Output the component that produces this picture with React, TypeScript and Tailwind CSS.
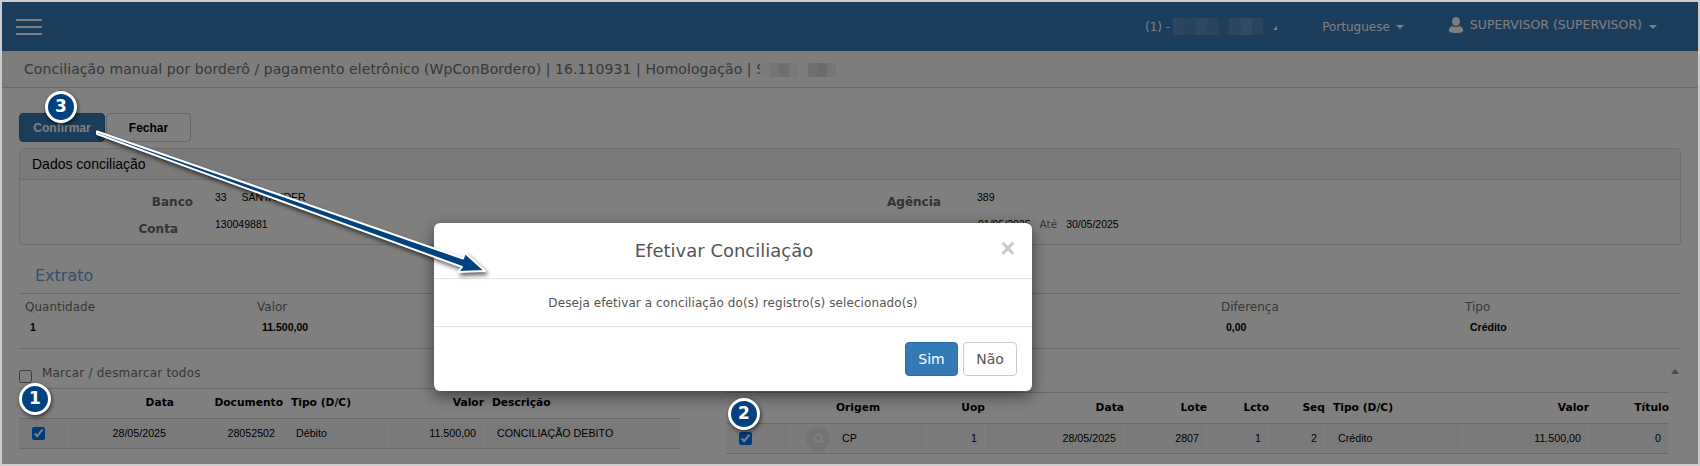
import { Search } from 'lucide-react'

type Col = { w: number; head?: string; cell?: string; align?: 'l' | 'r'; headPad?: number }

const leftCols: Col[] = [
  { w: 49 },
  { w: 106, head: 'Data', cell: '28/05/2025', align: 'r' },
  { w: 109, head: 'Documento', cell: '28052502', align: 'r' },
  { w: 105, head: 'Tipo (D/C)', cell: 'Débito', align: 'l', headPad: 8 },
  { w: 96, head: 'Valor', cell: '11.500,00', align: 'r' },
  { w: 197, head: 'Descrição', cell: 'CONCILIAÇÃO DEBITO', align: 'l', headPad: 8 },
]

const rightCols: Col[] = [
  { w: 65 },
  { w: 38 },
  { w: 98, head: 'Origem', cell: 'CP', align: 'l', headPad: 7 },
  { w: 58, head: 'Uop', cell: '1', align: 'r' },
  { w: 139, head: 'Data', cell: '28/05/2025', align: 'r' },
  { w: 83, head: 'Lote', cell: '2807', align: 'r' },
  { w: 62, head: 'Lcto', cell: '1', align: 'r' },
  { w: 56, head: 'Seq', cell: '2', align: 'r' },
  { w: 138, head: 'Tipo (D/C)', cell: 'Crédito', align: 'l', headPad: 8 },
  { w: 126, head: 'Valor', cell: '11.500,00', align: 'r' },
  { w: 80, head: 'Título', cell: '0', align: 'r' },
]

// these sit under the dark overlay, so the colours are twice as bright as they look
const navBlur = ['#5a8cba', '#4f86b6', '#5e90bc', '#5488b8', '#437cb0', '#5a8cba', '#6496c0', '#5488b8']
const titleBlur = ['#f4f4f4', '#e8e8e8', '#dcdcdc', '#f0f0f0', '#fafafa', '#e0e0e0', '#d8d8d8', '#ececec']

function Caret() {
  return <span className="inline-block border-x-[4px] border-t-[4px] border-x-transparent border-t-white" />
}

function Badge({ n, className }: { n: number; className: string }) {
  return (
    <div
      className={`absolute z-30 flex h-[32px] w-[32px] items-center justify-center rounded-full border-[3px] border-white bg-[#00427f] font-['DejaVu_Sans',sans-serif] text-[17px] font-bold text-white shadow-[1px_2px_4px_rgba(0,0,0,0.6)] ${className}`}
    >
      {n}
    </div>
  )
}

function Blur({ colors, className }: { colors: string[]; className: string }) {
  return (
    <div className={`relative flex ${className}`}>
      {colors.map((c, i) => (
        <span key={i} className="h-full flex-1" style={{ backgroundColor: c }} />
      ))}
    </div>
  )
}

function DataTable({ cols, icon }: { cols: Col[]; icon?: boolean }) {
  return (
    <div className="font-['Liberation_Sans',sans-serif] text-black">
      <div
        className={`flex items-center border-y border-[#d4d4d4] font-['DejaVu_Sans',sans-serif] text-[10.7px] leading-none font-bold ${icon ? 'h-[32px]' : 'h-[31px]'}`}
      >
        {cols.map((c, i) => (
          <div
            key={i}
            style={{ width: c.w, paddingLeft: c.headPad }}
            className={c.align === 'r' ? 'text-right' : ''}
          >
            {c.head}
          </div>
        ))}
      </div>
      <div className="flex h-[30px] items-center border-b border-[#d4d4d4] bg-[#f5f5f5] text-[10.7px]">
        {cols.map((c, i) => (
          <div
            key={i}
            style={{ width: c.w }}
            className={`flex h-full items-center border-r border-white ${c.align === 'r' ? 'justify-end pr-[7px]' : 'pl-[13px]'}`}
          >
            {i === 0 && <input type="checkbox" defaultChecked className="m-0 h-[13px] w-[13px]" />}
            {i === 1 && icon && (
              <span className="ml-[2px] flex h-[24px] w-[24px] shrink-0 items-center justify-center rounded-full bg-[#e6e6e6]">
                <Search size={11} strokeWidth={3.5} className="text-white" />
              </span>
            )}
            {c.cell}
          </div>
        ))}
      </div>
    </div>
  )
}

export default function App() {
  return (
    <div className="relative h-[466px] w-[1700px] overflow-hidden bg-[#cccccc] p-[2px]">
      <div className="relative h-full w-full overflow-hidden bg-white font-['DejaVu_Sans',sans-serif] text-[#707070]">
        <nav className="flex h-[49px] items-center bg-[#337ab7] text-[12px] text-white">
          <div className="ml-[14px] flex w-[26px] flex-col gap-[5px]">
            <span className="h-[2px] bg-white" />
            <span className="h-[2px] bg-white" />
            <span className="h-[2px] bg-white" />
          </div>
          <span className="ml-[1103px]">(1) -</span>
          <Blur colors={navBlur} className="ml-[3px] h-[17px] w-[90px]" />
          <span className="mt-[3px] ml-[10px] inline-block border-b-[4px] border-l-[4px] border-b-white border-l-transparent" />
          <span className="ml-[45px]">Portuguese</span>
          <span className="ml-[6px] flex"><Caret /></span>
          <svg viewBox="0 0 14 16" className="mb-[4px] ml-[45px] h-[16px] w-[14px] fill-white">
            <ellipse cx="7" cy="4.5" rx="4" ry="4.5" />
            <path d="M0 12.5C0 10.5 2 9.5 4 9.3c1 1 5 1 6 0 2 .2 4 1.2 4 3.2V14c0 1-1.5 2-7 2s-7-1-7-2z" />
          </svg>
          <span className="mb-[2px] ml-[7px] text-[12.5px]">SUPERVISOR (SUPERVISOR)</span>
          <span className="ml-[7px] flex"><Caret /></span>
        </nav>

        <div className="flex h-[37px] items-center border-b border-[#d4d4d4] bg-[#fafafa] pl-[22px] text-[14px] tracking-[0.08px]">
          Conciliação manual por borderô / pagamento eletrônico (WpConBordero) | 16.110931 | Homologação | S
          <Blur colors={titleBlur} className="mt-[1px] -ml-[5px] h-[14px] w-[76px]" />
        </div>

        <main className="px-[17px]">
          <div className="mt-[25px] flex font-['Liberation_Sans',sans-serif] text-[12px] font-bold">
            <button className="h-[29px] w-[86px] rounded-[4px] border border-[#2e6da4] bg-[#337ab7] text-white">
              Confirmar
            </button>
            <button className="ml-px h-[29px] w-[85px] rounded-[4px] border border-[#ccc] bg-white text-black">
              Fechar
            </button>
          </div>

          <section className="mt-[6px] h-[97px] rounded-[4px] border border-[#ddd]">
            <div className="flex h-[31px] items-center border-b border-[#ddd] bg-[#f5f5f5] pl-[12px] font-['Liberation_Sans',sans-serif] text-[14px] text-black">
              Dados conciliação
            </div>
            <div className="relative text-[12px] text-[#666]">
              <div className="flex pt-[10px]">
                <div className="w-[173px] pt-[3px] text-right font-bold">Banco</div>
                <div className="ml-[22px] w-[672px] font-['Liberation_Sans',sans-serif] text-[10.5px] text-black">
                  33 <span className="ml-[12px]">SANTANDER</span>
                </div>
                <div className="w-[90px] pt-[3px] font-bold">Agência</div>
                <div className="font-['Liberation_Sans',sans-serif] text-[10.5px] text-black">389</div>
              </div>
              <div className="flex pt-[6px]">
                <div className="w-[158px] pt-[3px] text-right font-bold">Conta</div>
                <div className="ml-[37px] w-[763px] font-['Liberation_Sans',sans-serif] text-[10.5px] text-black">
                  130049881
                </div>
                <div className="flex items-center self-start font-['Liberation_Sans',sans-serif] text-[10.5px] text-black">
                  01/05/2025
                  <span className="ml-[9px] font-['DejaVu_Sans',sans-serif] text-[#707070]">Até</span>
                  <span className="ml-[9px]">30/05/2025</span>
                </div>
              </div>
            </div>
          </section>

          <h2 className="mt-[21px] pl-[16px] text-[16px] leading-[20px] text-[#6aa0d8]">Extrato</h2>
          <div className="mt-[7px] flex h-[56px] border-y border-[#d4d4d4] pt-[6px] pl-[6px] text-[12px]">
            {[
              { w: 232, label: 'Quantidade', value: '1' },
              { w: 964, label: 'Valor', value: '11.500,00' },
              { w: 244, label: 'Diferença', value: '0,00' },
              { w: 200, label: 'Tipo', value: 'Crédito' },
            ].map((s) => (
              <div key={s.label} style={{ width: s.w }}>
                <div className="leading-[14px]">{s.label}</div>
                <div className="mt-[6px] pl-[5px] font-['Liberation_Sans',sans-serif] text-[10.5px] font-bold text-black">
                  {s.value}
                </div>
              </div>
            ))}
          </div>

          <div className="flex">
            <div className="w-[662px]">
              <div className="flex h-[39px] pt-[15px] text-[12px]">
                <input type="checkbox" className="m-0 mt-[6px] h-[13px] w-[13px]" />
                <span className="ml-[10px] tracking-[0.2px]">Marcar / desmarcar todos</span>
              </div>
              <DataTable cols={leftCols} />
            </div>
            <div className="ml-[45px] w-[959px]">
              <div className="flex h-[43px] justify-end pt-[20px] pr-[2px]">
                <span className="h-0 border-x-[4px] border-b-[5px] border-x-transparent border-b-[#999]" />
              </div>
              <div className="w-[943px]">
                <DataTable cols={rightCols} icon />
              </div>
            </div>
          </div>
        </main>

        <div className="absolute inset-0 z-10 bg-black/50" />

        <div className="absolute top-[221px] left-[432px] z-20 flex h-[168px] w-[598px] flex-col rounded-[6px] bg-white text-[#555] shadow-[0_5px_15px_rgba(0,0,0,0.5)]">
          <div className="relative flex h-[56px] items-center justify-center border-b border-[#e5e5e5] pr-[18px] text-[18px]">
            Efetivar Conciliação
            <span className="absolute top-[13px] right-[17px] font-['Liberation_Sans',sans-serif] text-[25px] leading-none font-bold text-[#c9c9c9]">
              ×
            </span>
          </div>
          <div className="flex h-[48px] items-center justify-center border-b border-[#e5e5e5] text-[12px] tracking-[0.09px]">
            Deseja efetivar a conciliação do(s) registro(s) selecionado(s)
          </div>
          <div className="flex flex-1 items-center justify-end gap-[5px] pr-[15px] text-[14px]">
            <button className="h-[34px] w-[53px] rounded-[4px] border border-[#2e6da4] bg-[#337ab7] text-white">Sim</button>
            <button className="h-[34px] w-[54px] rounded-[4px] border border-[#ccc] bg-white text-[#555]">Não</button>
          </div>
        </div>

        <svg className="pointer-events-none absolute top-0 left-0 z-30 h-[462px] w-[1696px] drop-shadow-[2px_3px_2px_rgba(0,0,0,0.6)]">
          <path
            d="M95 129.5L461 256.5L463 251L483 269L456 270L460 265L95 132Z"
            fill="#00427f"
            stroke="white"
            strokeWidth="2"
            strokeLinejoin="round"
          />
        </svg>
      </div>

      <Badge n={3} className="top-[91px] left-[45px]" />
      <Badge n={1} className="top-[383px] left-[19px]" />
      <Badge n={2} className="top-[398px] left-[728px]" />
    </div>
  )
}
